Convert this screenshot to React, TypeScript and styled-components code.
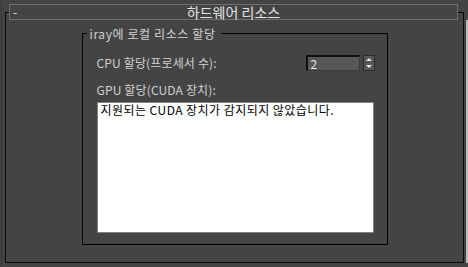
import React from "react";
import styled, { createGlobalStyle } from "styled-components";

const Global = createGlobalStyle`
  html, body { margin: 0; padding: 0; background: #444444; }
  body { font-family: "Noto Sans CJK KR", "Liberation Sans", sans-serif; }
`;

const Screen = styled.div`
  width: 468px;
  height: 267px;
  display: flex;
  background: #444444;
  overflow: hidden;
  padding-left: 1px;
  box-sizing: border-box;
`;

const Panel = styled.div`
  flex: 0 0 465px;
  box-sizing: border-box;
  border-left: 1px solid #363636;
  padding: 12px 0 0 3px;
`;

const ScrollStrip = styled.div`
  flex: 0 0 2px;
  margin-top: 20px;
  height: 243px;
  background: #bdbdbd;
`;

const Frame = styled.div`
  box-sizing: border-box;
  width: 459px;
  height: 251px;
  border: 1px solid #0a0a0a;
  display: flex;
  flex-direction: column;
  align-items: center;
`;

const Header = styled.div`
  align-self: stretch;
  margin: -9px 5px 0 3px;
  height: 16px;
  box-sizing: border-box;
  border: 1px solid #6f6f6f;
  background: #444444;
  display: grid;
  grid-template-columns: 1fr auto 1fr;
  align-items: center;
  color: #e4e4e4;
`;

const Collapse = styled.span`
  font-size: 12px;
  line-height: 14px;
  padding-left: 3px;
  color: #f0f0f0;
`;

const HeaderTitle = styled.span`
  font-size: 14px;
  line-height: 14px;
`;

const GroupBox = styled.div`
  box-sizing: border-box;
  width: 306px;
  height: 212px;
  margin-top: 13px;
  border: 1px solid #000000;
  display: flex;
  flex-direction: column;
`;

const GroupTitle = styled.span`
  align-self: flex-start;
  margin: -7px 0 0 4px;
  padding: 0 5px 0 3px;
  background: #444444;
  color: #d2d2d2;
  font-size: 12px;
  line-height: 14px;
  letter-spacing: 0.6px;
`;

const GroupBody = styled.div`
  display: flex;
  flex-direction: column;
  padding: 0 13px 12px 14px;
`;

const Row = styled.div`
  margin-top: 14px;
  height: 16px;
  display: flex;
  align-items: center;
  justify-content: space-between;
`;

const Label = styled.span<{ $gap?: number }>`
  color: #d0d0d0;
  font-size: 12px;
  line-height: 14px;
  letter-spacing: 0.15px;
  margin-top: ${(p) => p.$gap ?? 0}px;
`;

const Spinner = styled.div`
  display: flex;
  gap: 3px;
  margin-right: -1px;
`;

const SpinInput = styled.div`
  box-sizing: border-box;
  width: 54px;
  height: 16px;
  background: #575757;
  border-top: 2px solid #0e0e0e;
  border-left: 2px solid #0e0e0e;
  border-right: 1px solid #3a3a3a;
  border-bottom: 1px solid #3a3a3a;
  color: #e2e6ee;
  font-size: 12px;
  line-height: 13px;
  padding-left: 3px;
`;

const SpinButtons = styled.div`
  box-sizing: border-box;
  width: 12px;
  height: 16px;
  border: 1px solid #2a2a2a;
  background: #575757;
  display: flex;
  flex-direction: column;
  align-items: center;
  justify-content: space-around;
`;

const Arrow = styled.div<{ $down?: boolean }>`
  width: 0;
  height: 0;
  border-left: 3px solid transparent;
  border-right: 3px solid transparent;
  ${(p) =>
    p.$down
      ? "border-top: 3px solid #e8e8e8;"
      : "border-bottom: 3px solid #e8e8e8;"}
`;

const TextBox = styled.div`
  box-sizing: border-box;
  margin-top: 5px;
  width: 277px;
  height: 131px;
  background: #ffffff;
  border: 1px solid #7b8089;
  padding: 0 3px;
  color: #000000;
  font-size: 12px;
  line-height: 14px;
  letter-spacing: 0.45px;
`;

export default function App() {
  return (
    <>
      <Global />
      <Screen>
        <Panel>
          <Frame>
            <Header>
              <Collapse>-</Collapse>
              <HeaderTitle>하드웨어 리소스</HeaderTitle>
              <span />
            </Header>
            <GroupBox>
              <GroupTitle>iray에 로컬 리소스 할당</GroupTitle>
              <GroupBody>
                <Row>
                  <Label>CPU 할당(프로세서 수):</Label>
                  <Spinner>
                    <SpinInput>2</SpinInput>
                    <SpinButtons>
                      <Arrow />
                      <Arrow $down />
                    </SpinButtons>
                  </Spinner>
                </Row>
                <Label $gap={12}>GPU 할당(CUDA 장치):</Label>
                <TextBox>지원되는 CUDA 장치가 감지되지 않았습니다.</TextBox>
              </GroupBody>
            </GroupBox>
          </Frame>
        </Panel>
        <ScrollStrip />
      </Screen>
    </>
  );
}
